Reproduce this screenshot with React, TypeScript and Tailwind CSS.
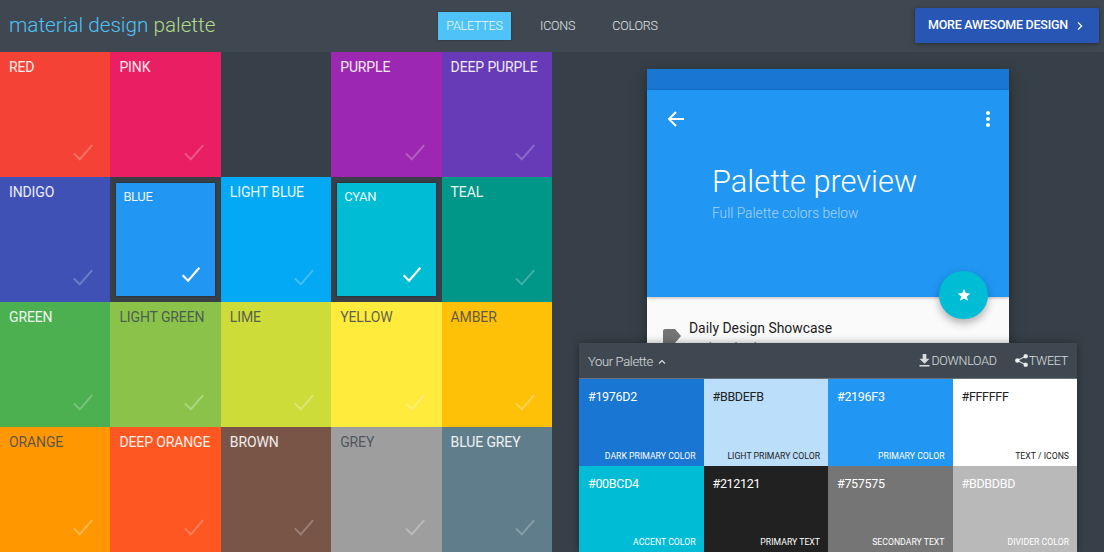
import React from "react";

const Check = ({ cls, w }: { cls: string; w: number }) => (
  <svg viewBox="0 0 24 24" className={cls} fill="none" stroke="currentColor" strokeWidth={w}>
    <path d="M2 13.5 L8.5 20 L22 4.5" />
  </svg>
);

type T = { n: string; bg: string; dark?: boolean; sel?: boolean; empty?: boolean };
const tiles: T[] = [
  { n: "RED", bg: "bg-[#f44336]" },
  { n: "PINK", bg: "bg-[#e91e63]" },
  { n: "", bg: "bg-[#374048]", empty: true },
  { n: "PURPLE", bg: "bg-[#9c27b0]" },
  { n: "DEEP PURPLE", bg: "bg-[#673ab7]" },
  { n: "INDIGO", bg: "bg-[#3f51b5]" },
  { n: "BLUE", bg: "bg-[#2196f3]", sel: true },
  { n: "LIGHT BLUE", bg: "bg-[#03a9f4]" },
  { n: "CYAN", bg: "bg-[#00bcd4]", sel: true },
  { n: "TEAL", bg: "bg-[#009688]" },
  { n: "GREEN", bg: "bg-[#4caf50]" },
  { n: "LIGHT GREEN", bg: "bg-[#8bc34a]", dark: true },
  { n: "LIME", bg: "bg-[#cddc39]", dark: true },
  { n: "YELLOW", bg: "bg-[#ffeb3b]", dark: true },
  { n: "AMBER", bg: "bg-[#ffc107]", dark: true },
  { n: "ORANGE", bg: "bg-[#ff9800]", dark: true },
  { n: "DEEP ORANGE", bg: "bg-[#ff5722]" },
  { n: "BROWN", bg: "bg-[#795548]" },
  { n: "GREY", bg: "bg-[#9e9e9e]", dark: true },
  { n: "BLUE GREY", bg: "bg-[#607d8b]" },
];

const Tile = ({ t }: { t: T }) => {
  if (t.empty) return <div className={t.bg} />;
  if (t.sel)
    return (
      <div className="bg-[#374048] p-[6px]">
        <div className={`${t.bg} h-full flex flex-col justify-between shadow-[0_0_2px_rgba(0,0,0,0.5)] pl-[7px] pr-[14px] pt-[4px] pb-[12px]`}>
          <span className="text-[13px] tracking-[-0.4px] leading-5 text-white/95 whitespace-nowrap">{t.n}</span>
          <Check cls="self-end w-[20px] h-[20px] text-white" w={2.6} />
        </div>
      </div>
    );
  return (
    <div className={`${t.bg} flex flex-col justify-between pl-[9px] pr-[16px] pt-[5px] pb-[14px]`}>
      <span className={`text-[14px] tracking-[-0.12px] leading-5 whitespace-nowrap ${t.dark ? "text-[#3f4851]/85" : "text-white/90"}`}>{t.n}</span>
      <Check cls={`self-end w-[22px] h-[22px] ${t.dark ? "text-white/30" : "text-white/25"}`} w={2.2} />
    </div>
  );
};

type S = { hex: string; label: string; bg: string; top: string; bottom: string };
const swatches: S[] = [
  { hex: "#1976D2", label: "DARK PRIMARY COLOR", bg: "bg-[#1976d2]", top: "text-white", bottom: "text-white" },
  { hex: "#BBDEFB", label: "LIGHT PRIMARY COLOR", bg: "bg-[#bbdefb]", top: "text-[#212121]", bottom: "text-[#212121]" },
  { hex: "#2196F3", label: "PRIMARY COLOR", bg: "bg-[#2196f3]", top: "text-white", bottom: "text-white" },
  { hex: "#FFFFFF", label: "TEXT / ICONS", bg: "bg-white", top: "text-[#212121]", bottom: "text-[#212121]" },
  { hex: "#00BCD4", label: "ACCENT COLOR", bg: "bg-[#00bcd4]", top: "text-white", bottom: "text-white" },
  { hex: "#212121", label: "PRIMARY TEXT", bg: "bg-[#212121]", top: "text-white", bottom: "text-white" },
  { hex: "#757575", label: "SECONDARY TEXT", bg: "bg-[#757575]", top: "text-white", bottom: "text-white" },
  { hex: "#BDBDBD", label: "DIVIDER COLOR", bg: "bg-[#b9b9b9]", top: "text-white", bottom: "text-white" },
];

export default function App() {
  return (
    <div className="w-[1104px] h-[552px] overflow-hidden bg-[#374048] font-['Roboto',sans-serif] relative">
      <header className="h-[52px] bg-[#3f4851] flex items-center">
        <div className="w-[438px] pl-[9px] text-[20.7px] font-light leading-none pb-[2px]">
          <span className="text-[#4fc3f7]">material design</span> <span className="text-[#b4d88a]">palette</span>
        </div>
        <nav className="flex items-center text-[12.5px] tracking-[-0.2px] text-white/85 font-light">
          <span className="w-[73px] h-[28px] flex items-center justify-center bg-[#4fc3f7] text-white/90 shadow-[0_0_2px_rgba(0,0,0,0.4)]">PALETTES</span>
          <span className="ml-[29px]">ICONS</span>
          <span className="ml-[37px]">COLORS</span>
        </nav>
        <div className="ml-auto mr-[5px] mb-[1px] w-[184px] h-[35px] rounded-[2px] bg-[#2756b5] shadow-[0_1px_5px_rgba(0,0,0,0.4)] flex items-center pl-[10px] gap-[8px] text-white text-[12.5px] tracking-[-0.25px] font-medium whitespace-nowrap">
          <span className="pl-[3px]">MORE AWESOME DESIGN</span>
          <svg viewBox="0 0 10 12" className="w-[8px] h-[10px]" fill="none" stroke="currentColor" strokeWidth="1.6">
            <path d="M2.5 1.5 L7 6 L2.5 10.5" />
          </svg>
        </div>
      </header>

      <div className="flex h-[500px]">
        <div className="w-[552px] grid grid-cols-5 grid-rows-4 shrink-0">
          {tiles.map((t, i) => (
            <Tile key={i} t={t} />
          ))}
        </div>
        <div className="pl-[95px] pt-[17px]">
          <div className="w-[362px] h-[400px] bg-[#fafafa] shadow-[0_4px_14px_rgba(0,0,0,0.35)] relative">
            <div className="h-[21px] bg-[#1976d2]" />
            <div className="h-[207px] bg-[#2196f3] shadow-[0_1px_3px_rgba(0,0,0,0.25)] relative">
              <div className="flex items-center justify-between pl-[20px] pr-[19px] pt-[20px]">
                <svg viewBox="0 0 18 18" className="w-[18px] h-[18px]" fill="none" stroke="white" strokeWidth="2">
                  <path d="M17 9 H2 M9 2 L2 9 L9 16" />
                </svg>
                <svg viewBox="0 0 4 16" className="w-[4px] h-[16px]" fill="white">
                  <circle cx="2" cy="2" r="2" />
                  <circle cx="2" cy="8" r="2" />
                  <circle cx="2" cy="14" r="2" />
                </svg>
              </div>
              <div className="pl-[65px] pt-[34px] text-white">
                <div className="text-[30.8px] leading-[40px] font-light">Palette preview</div>
                <div className="text-[13.75px] leading-5 font-light text-white/60 mt-[1px]">Full Palette colors below</div>
              </div>
            </div>
            <div className="absolute left-[292px] top-[202px] w-[49px] h-[48px] rounded-full bg-[#00bcd4] shadow-[0_4px_8px_rgba(0,0,0,0.3)] flex items-center justify-center">
              <svg viewBox="0 0 24 24" className="w-[14px] h-[14px]" fill="white">
                <path d="M12 1.5 L15.1 8.6 L22.8 9.3 L17 14.4 L18.7 22 L12 18 L5.3 22 L7 14.4 L1.2 9.3 L8.9 8.6 Z" />
              </svg>
            </div>
            <div className="flex pl-[16px] pt-[21px]">
              <svg viewBox="0 0 19 22" className="w-[19px] h-[22px] mt-[11px]" fill="#757575">
                <path d="M0 2 Q0 0 2 0 H12 L18 7 L12 14 V22 H0 Z" />
              </svg>
              <div className="ml-[7px]">
                <div className="text-[13.9px] leading-5 text-[#212121]">Daily Design Showcase</div>
                <div className="text-[13px] leading-5 text-[#757575]">High Hybrid</div>
              </div>
            </div>
          </div>
        </div>
      </div>

      <section className="absolute left-[579px] top-[343px] w-[498px] h-[209px] shadow-[0_0_8px_rgba(0,0,0,0.35)] flex flex-col">
        <div className="h-[36px] bg-[#3f4851] border-b border-[#6b7279] flex items-center pl-[9px] pr-[9px] pt-[2px] text-[13px] text-white/80 font-light shrink-0">
          <span className="tracking-[-0.35px]">Your Palette</span>
          <svg viewBox="0 0 10 8" className="w-[8px] h-[6px] ml-[5px]" fill="none" stroke="currentColor" strokeWidth="1.6">
            <path d="M1 6 L5 2 L9 6" />
          </svg>
          <svg viewBox="0 0 12 14" className="w-[11px] h-[13px] ml-auto mb-[3px]" fill="currentColor">
            <path d="M4 0 H8 V5 H11.5 L6 10.5 L0.5 5 H4 Z M0.5 12 H11.5 V13.6 H0.5 Z" />
          </svg>
          <span className="ml-[1px] text-[12.5px] tracking-[-0.25px]">DOWNLOAD</span>
          <svg viewBox="0 0 14 14" className="w-[13px] h-[13px] ml-[18px] mb-[2px]" fill="currentColor" stroke="currentColor" strokeWidth="1.2">
            <circle cx="11.5" cy="2.5" r="1.8" />
            <circle cx="2.5" cy="7" r="1.8" />
            <circle cx="11.5" cy="11.5" r="1.8" />
            <path d="M11.5 2.5 L2.5 7 L11.5 11.5" fill="none" />
          </svg>
          <span className="ml-[1px] text-[12.5px] tracking-[-0.25px]">TWEET</span>
        </div>
        <div className="grid grid-cols-4 grid-rows-2 flex-1">
          {swatches.map((s) => (
            <div key={s.hex} className={`${s.bg} flex flex-col justify-between pl-[9px] pr-[8px] pt-[9px] pb-[3px]`}>
              <span className={`text-[12.5px] tracking-[-0.3px] leading-[18px] ${s.top}`}>{s.hex}</span>
              <span className={`self-end text-[8.7px] leading-[14px] ${s.bottom}`}>{s.label}</span>
            </div>
          ))}
        </div>
      </section>
    </div>
  );
}
